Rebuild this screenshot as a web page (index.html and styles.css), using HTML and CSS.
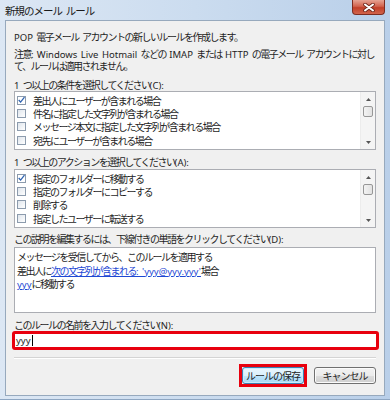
FILE: index.html
```html
<!DOCTYPE html>
<html lang="ja">
<head>
    <meta charset="UTF-8">
    <meta name="viewport" content="width=device-width, initial-scale=1.0">
    <title>新規のメール ルール</title>
    <link rel="stylesheet" href="styles.css">
</head>
<body>

<div class="window">
    <div class="titlebar">
        <span class="title">新規のメール ルール</span>
        <span class="close-btn">
            <svg width="12" height="9" viewBox="0 0 12 9">
                <path d="M2 1.5 L10 7.5 M10 1.5 L2 7.5" stroke="#6b2418" stroke-width="3.6" stroke-linecap="round"/>
                <path d="M2 1.5 L10 7.5 M10 1.5 L2 7.5" stroke="#fff" stroke-width="2" stroke-linecap="round"/>
            </svg>
        </span>
    </div>

    <div class="client">
        <div class="intro"><span class="en">POP</span> 電子メール アカウントの新しいルールを作成します。</div>
        <div class="note">注意<span class="en">:</span> <span class="en">Windows Live Hotmail</span> などの <span class="en">IMAP</span> または <span class="en">HTTP</span> の電子メール アカウントに対して、ルールは適用されません。</div>

        <div class="label label-c"><span class="en">1</span> つ以上の条件を選択してください<span class="en">(C):</span></div>
        <div class="listbox">
            <div class="items">
                <div class="row"><span class="cb checked"><svg width="8" height="8" viewBox="0 0 8 8"><path d="M0.8 4 L3 6.4 L7.4 0.8" fill="none" stroke="#2f63b0" stroke-width="1.5"/></svg></span>差出人にユーザーが含まれる場合</div>
                <div class="row"><span class="cb"></span>件名に指定した文字列が含まれる場合</div>
                <div class="row"><span class="cb"></span>メッセージ本文に指定した文字列が含まれる場合</div>
                <div class="row"><span class="cb"></span>宛先にユーザーが含まれる場合</div>
            </div>
            <div class="scrollbar">
                <div class="arrow"><svg width="5" height="3" viewBox="0 0 5 3"><path d="M0 3 L2.5 0 L5 3 Z" fill="#555"/></svg></div>
                <div class="thumb"></div>
                <div class="track"></div>
                <div class="arrow"><svg width="5" height="3" viewBox="0 0 5 3"><path d="M0 0 L2.5 3 L5 0 Z" fill="#555"/></svg></div>
            </div>
        </div>

        <div class="label label-a"><span class="en">1</span> つ以上のアクションを選択してください<span class="en">(A):</span></div>
        <div class="listbox listbox-a">
            <div class="items">
                <div class="row"><span class="cb checked"><svg width="8" height="8" viewBox="0 0 8 8"><path d="M0.8 4 L3 6.4 L7.4 0.8" fill="none" stroke="#2f63b0" stroke-width="1.5"/></svg></span>指定のフォルダーに移動する</div>
                <div class="row"><span class="cb"></span>指定のフォルダーにコピーする</div>
                <div class="row"><span class="cb"></span>削除する</div>
                <div class="row"><span class="cb"></span>指定したユーザーに転送する</div>
            </div>
            <div class="scrollbar">
                <div class="arrow"><svg width="5" height="3" viewBox="0 0 5 3"><path d="M0 3 L2.5 0 L5 3 Z" fill="#555"/></svg></div>
                <div class="thumb"></div>
                <div class="track"></div>
                <div class="arrow"><svg width="5" height="3" viewBox="0 0 5 3"><path d="M0 0 L2.5 3 L5 0 Z" fill="#555"/></svg></div>
            </div>
        </div>

        <div class="label label-d">この説明を編集するには、下線付きの単語をクリックしてください<span class="en">(D):</span></div>
        <div class="desc">
            <div>メッセージを受信してから、このルールを適用する</div>
            <div>差出人に<a href="#">次の文字列が含まれる<span class="en">: 'yyy@yyy.yyy'</span></a>場合</div>
            <div><a href="#" class="en">yyy</a>に移動する</div>
        </div>

        <div class="label label-n">このルールの名前を入力してください<span class="en">(N):</span></div>
        <div class="name-box"><span class="en">yyy</span><span class="caret"></span></div>

        <div class="separator"></div>

        <div class="buttons">
            <div class="highlight"><div class="btn btn-default">ルールの保存</div></div>
            <div class="btn">キャンセル</div>
        </div>
    </div>
</div>

</body>
</html>
```

FILE: styles.css
```css
body {
    margin: 0;
    font-family: "Noto Sans CJK JP", sans-serif;
    font-size: 10px;
    color: #1e1e1e;
    letter-spacing: -1.5px;
    word-spacing: 2.5px;
}

.en {
    font-family: "Noto Sans", "Noto Sans CJK JP", sans-serif;
    font-size: 9.5px;
    line-height: 1;
    letter-spacing: 0;
    word-spacing: 1px;
}

.window {
    width: 390px;
    height: 400px;
    box-sizing: border-box;
    padding: 0 5px 3px 5px;
    background: linear-gradient(to right, #dce7f4 0%, #cbdcef 50%, #b9cfe9 100%);
    border-bottom: 1px solid #8ea6c2;
}

.titlebar {
    height: 20px;
    display: flex;
    justify-content: space-between;
    align-items: flex-start;
}

.title {
    margin-top: 3px;
    line-height: 15px;
    font-size: 10.5px;
    letter-spacing: -1px;
    color: #1b1b1b;
}

.close-btn {
    width: 33px;
    height: 15px;
    box-sizing: border-box;
    border: 1px solid #7d2c20;
    border-top: none;
    border-radius: 0 0 4px 4px;
    background: linear-gradient(#e6a393 0%, #d2634e 45%, #c23f28 55%, #d1644c 100%);
    display: flex;
    align-items: center;
    justify-content: center;
}

.client {
    height: 376px;
    box-sizing: border-box;
    border: 1px solid #97a9bd;
    background-color: #f0f0f0;
    padding: 9px 8px 8px 8px;
    overflow: hidden;
}

.intro {
    height: 13px;
    line-height: 13px;
    white-space: nowrap;
}

.note {
    margin-top: 5px;
    line-height: 12px;
    height: 24px;
}

.label {
    height: 13px;
    line-height: 13px;
    white-space: nowrap;
}

.label-c { margin-top: 6px; }
.label-a { margin-top: 5px; }
.label-d { margin-top: 4px; }
.label-n { margin-top: 5px; }

.listbox {
    height: 59px;
    box-sizing: border-box;
    border: 1px solid #abadb3;
    background-color: white;
    display: flex;
}

.listbox-a {
    margin-top: 1px;
}

.items {
    flex: 1;
    padding-top: 1.5px;
}

.row {
    height: 13.3px;
    display: flex;
    align-items: center;
    white-space: nowrap;
}

.cb {
    width: 7px;
    height: 7px;
    border: 1px solid #8c9bad;
    background: linear-gradient(135deg, #dfe5ec, #ffffff);
    margin: 0 7px 0 2px;
    display: flex;
    align-items: center;
    justify-content: center;
    flex-shrink: 0;
}

.cb.checked {
    background: white;
}

.scrollbar {
    width: 14px;
    background-color: #f4f4f4;
    border-left: 1px solid #ececec;
    display: flex;
    flex-direction: column;
    align-items: center;
}

.arrow {
    height: 14px;
    display: flex;
    align-items: center;
    justify-content: center;
}

.thumb {
    width: 10px;
    height: 11px;
    box-sizing: border-box;
    border: 1px solid #979797;
    border-radius: 2px;
    background: linear-gradient(to right, #f3f3f3, #e2e2e2);
}

.track {
    flex: 1;
}

.desc {
    margin-top: 2px;
    height: 66px;
    box-sizing: border-box;
    border: 1px solid #abadb3;
    background-color: white;
    padding: 2px 2px;
    line-height: 13.5px;
    white-space: nowrap;
}

.desc div {
    height: 13.5px;
}

.desc a {
    color: #1e48d4;
    text-decoration: underline;
}

.name-box {
    height: 19px;
    box-sizing: border-box;
    margin: 0 -3px 0 -2px;
    border: 3px solid #e8000e;
    border-radius: 3px;
    background-color: white;
    padding: 0 1px;
    display: flex;
    align-items: center;
}

.caret {
    display: inline-block;
    width: 1px;
    height: 11px;
    margin-left: 1px;
    background-color: black;
}

.separator {
    margin-top: 7px;
    height: 1px;
    background-color: #d4d4d4;
    border-bottom: 1px solid #ffffff;
}

.buttons {
    margin-top: 5px;
    display: flex;
    justify-content: flex-end;
    align-items: center;
    gap: 7px;
}

.highlight {
    border: 3px solid #e8000e;
    display: flex;
}

.btn {
    width: 62px;
    height: 17px;
    box-sizing: border-box;
    border: 1px solid #707070;
    border-radius: 3px;
    background: linear-gradient(#f2f2f2 0%, #ebebeb 50%, #dddddd 50%, #cfcfcf 100%);
    box-shadow: inset 0 0 0 1px #fbfbfb;
    display: flex;
    align-items: center;
    justify-content: center;
    line-height: 1;
    letter-spacing: -1px;
}

.btn-default {
    border-color: #3c7fb1;
    background: linear-gradient(#eaf6fd 0%, #d9f0fc 50%, #bee6fd 50%, #a7d9f5 100%);
    box-shadow: inset 0 0 0 1px #c8ecfd;
}
```
